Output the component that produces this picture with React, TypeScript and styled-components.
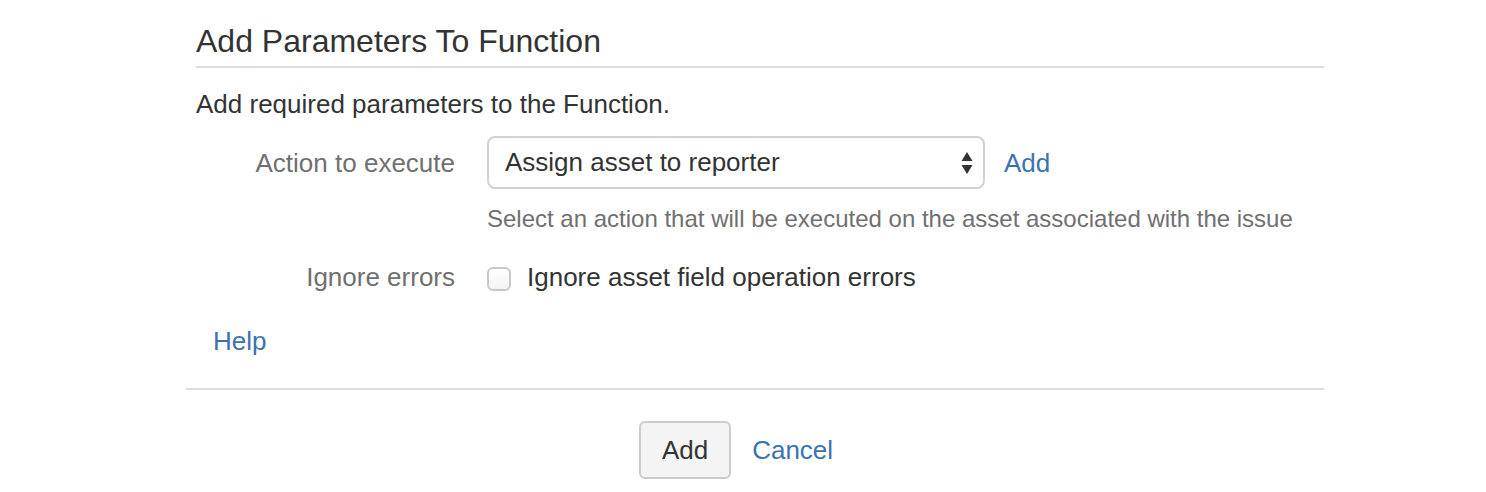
import React from "react";
import styled, { createGlobalStyle } from "styled-components";

const Global = createGlobalStyle`
  html, body { margin: 0; padding: 0; background: #ffffff; }
  body { font-family: "Liberation Sans", Arial, Helvetica, sans-serif; color: #333333; }
`;

const Dialog = styled.div`
  width: 1138px;
  margin-left: 186px;
  padding-top: 21px;
`;

const Header = styled.div`
  margin-left: 10px;
  padding-bottom: 5px;
  border-bottom: 2px solid #dddddd;
`;

const Title = styled.h2`
  margin: 0;
  font-size: 32px;
  line-height: 40px;
  font-weight: 400;
  color: #333333;
`;

const Intro = styled.p`
  margin: 16px 0 0 10px;
  font-size: 26px;
  line-height: 40px;
  color: #333333;
`;

const FieldGroup = styled.div<{ $top: number }>`
  display: grid;
  grid-template-columns: 269px 1fr;
  column-gap: 32px;
  align-items: center;
  margin-top: ${(p) => p.$top}px;
`;

const Label = styled.label`
  text-align: right;
  font-size: 26px;
  line-height: 40px;
  color: #707070;
`;

const Control = styled.div`
  display: flex;
  align-items: center;
`;

const SelectBox = styled.div`
  box-sizing: border-box;
  width: 498px;
  height: 53px;
  border: 2px solid #d2d2d2;
  border-radius: 8px;
  background: #ffffff;
  display: flex;
  align-items: center;
  justify-content: space-between;
  padding: 0 10px 0 16px;
  font-size: 26px;
  color: #333333;
`;

const Link = styled.a<{ $ml?: number }>`
  color: #3b73af;
  text-decoration: none;
  font-size: 26px;
  line-height: 40px;
  margin-left: ${(p) => p.$ml ?? 0}px;
  cursor: pointer;
`;

const Description = styled.div`
  grid-column: 2;
  margin-top: 10px;
  font-size: 24px;
  line-height: 40px;
  color: #707070;
`;

const Checkbox = styled.span`
  box-sizing: border-box;
  width: 24px;
  height: 24px;
  border: 2px solid #c8c8c8;
  border-radius: 6px;
  background: linear-gradient(#ffffff, #f4f4f4);
  margin-top: 4px;
`;

const CheckLabel = styled.span`
  margin-left: 16px;
  font-size: 26px;
  line-height: 40px;
  color: #333333;
`;

const HelpRow = styled.div`
  margin-top: 24px;
  padding-left: 27px;
  padding-bottom: 27px;
  border-bottom: 2px solid #dddddd;
`;

const Footer = styled.div`
  display: flex;
  justify-content: center;
  align-items: center;
  padding-top: 31px;
  padding-right: 38px;
`;

const Button = styled.button`
  box-sizing: border-box;
  height: 58px;
  padding: 0 21px;
  border: 2px solid #cccccc;
  border-radius: 6px;
  background: #f4f4f4;
  font-family: "Liberation Sans", Arial, Helvetica, sans-serif;
  font-size: 26px;
  color: #333333;
`;

const Arrows = () => (
  <svg width="12" height="24" viewBox="0 0 12 24">
    <path d="M6 1 L11.5 10 L0.5 10 Z" fill="#333" />
    <path d="M6 23 L11.5 14 L0.5 14 Z" fill="#333" />
  </svg>
);

export default function App() {
  return (
    <>
      <Global />
      <Dialog>
        <Header>
          <Title>Add Parameters To Function</Title>
        </Header>
        <Intro>Add required parameters to the Function.</Intro>
        <FieldGroup $top={12}>
          <Label>Action to execute</Label>
          <Control>
            <SelectBox>
              <span>Assign asset to reporter</span>
              <Arrows />
            </SelectBox>
            <Link $ml={19}>Add</Link>
          </Control>
          <Description>Select an action that will be executed on the asset associated with the issue</Description>
        </FieldGroup>
        <FieldGroup $top={18}>
          <Label>Ignore errors</Label>
          <Control>
            <Checkbox />
            <CheckLabel>Ignore asset field operation errors</CheckLabel>
          </Control>
        </FieldGroup>
        <HelpRow>
          <Link>Help</Link>
        </HelpRow>
        <Footer>
          <Button>Add</Button>
          <Link $ml={21}>Cancel</Link>
        </Footer>
      </Dialog>
    </>
  );
}
